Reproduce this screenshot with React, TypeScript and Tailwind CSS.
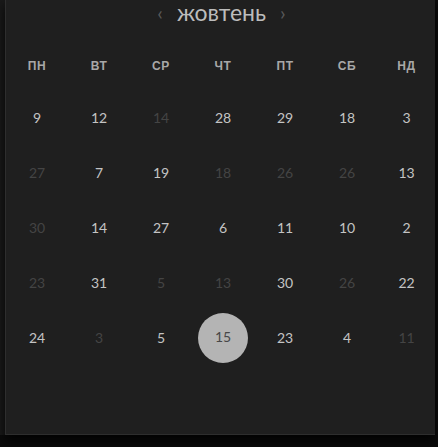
import React from "react";

type Day = { n: number; dim?: boolean; selected?: boolean };

const weekdays = ["ПН", "ВТ", "СР", "ЧТ", "ПТ", "СБ", "НД"];

const rows: Day[][] = [
  [{ n: 9 }, { n: 12 }, { n: 14, dim: true }, { n: 28 }, { n: 29 }, { n: 18 }, { n: 3 }],
  [{ n: 27, dim: true }, { n: 7 }, { n: 19 }, { n: 18, dim: true }, { n: 26, dim: true }, { n: 26, dim: true }, { n: 13 }],
  [{ n: 30, dim: true }, { n: 14 }, { n: 27 }, { n: 6 }, { n: 11 }, { n: 10 }, { n: 2 }],
  [{ n: 23, dim: true }, { n: 31 }, { n: 5, dim: true }, { n: 13, dim: true }, { n: 30 }, { n: 26, dim: true }, { n: 22 }],
  [{ n: 24 }, { n: 3, dim: true }, { n: 5 }, { n: 15, selected: true }, { n: 23 }, { n: 4 }, { n: 11, dim: true }],
];

// columns are a touch narrower on the right edge
const cols = "grid grid-cols-[62px_62px_62px_62px_62px_62px_57px]";

export default function App() {
  return (
    <div className="h-[447px] w-[438px] overflow-hidden bg-[#0b0b0b] font-['Lato','Noto_Sans',sans-serif]">
      <div className="flex h-[435px] w-[435px] bg-[#191919] pl-[5px]">
        <div className="flex w-[430px] flex-col border-b border-l border-[#2e2e2e] bg-[#1f1f1f] shadow-[0_6px_10px_rgba(0,0,0,0.8)]">
          {/* Month header */}
          <div className="flex h-[24px] items-center justify-center gap-[14px] pl-[2px]">
            <span className="text-[20px] leading-[24px] text-[#5a5a5a]">‹</span>
            <span className="text-[23px] leading-[24px] text-[#bcbcbc]">жовтень</span>
            <span className="text-[20px] leading-[24px] text-[#5a5a5a]">›</span>
          </div>

          {/* Weekday labels */}
          <div className={`mt-[32px] h-[20px] ${cols}`}>
            {weekdays.map((w) => (
              <div
                key={w}
                className="flex items-center justify-center font-['Liberation_Sans',sans-serif] text-[12px] font-bold tracking-[0.6px] text-[#a8a8a8]"
              >
                {w}
              </div>
            ))}
          </div>

          {/* Days */}
          <div className="mt-[14px] flex flex-col">
            {rows.map((row, i) => (
              <div key={i} className={`h-[55px] ${cols}`}>
                {row.map((d, j) => (
                  <div key={j} className="flex items-center justify-center">
                    {d.selected ? (
                      <div className="flex h-[50px] w-[50px] items-center justify-center rounded-full bg-[#b4b4b4] pb-[2px] text-[14px] text-[#474747]">
                        {d.n}
                      </div>
                    ) : (
                      <span className={`text-[14px] ${d.dim ? "text-[#444444]" : "text-[#c4c4c4]"}`}>{d.n}</span>
                    )}
                  </div>
                ))}
              </div>
            ))}
          </div>
        </div>
      </div>
    </div>
  );
}
